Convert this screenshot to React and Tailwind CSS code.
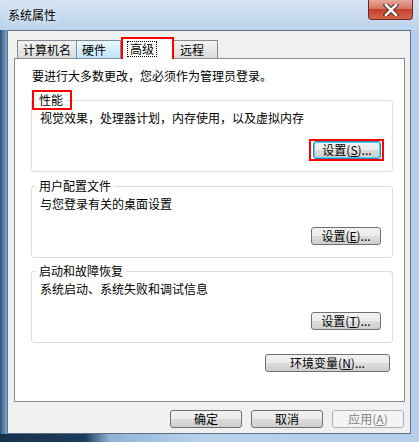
import React from 'react';

const font = { fontFamily: '"Noto Sans CJK SC", "Noto Sans", sans-serif' };

const Btn = ({ children, className = '', focused = false, disabled = false }) => (
    <div
        className={
            'h-[18px] rounded-[3px] border flex items-center justify-center text-[12px] leading-[14px] ' +
            (disabled
                ? 'border-[#adb2b5] bg-[#f4f4f4] text-[#838383] '
                : focused
                    ? 'border-[#3c7fb1] bg-[linear-gradient(#f2f2f2_0%,#ebebeb_50%,#dddddd_50%,#cfcfcf_100%)] shadow-[inset_1px_1px_0_#48d8fb,inset_-1px_-1px_0_#48d8fb] text-black '
                    : 'border-[#707070] bg-[linear-gradient(#f2f2f2_0%,#ebebeb_50%,#dddddd_50%,#cfcfcf_100%)] text-black ') +
            className
        }
    >
        {children}
    </div>
);

const Group = ({ title, desc, button, focused, boxed, className = '' }) => (
    <div className={'ml-[16px] w-[362px] h-[72px] border border-[#d5dfe5] rounded-[3px] flex flex-col ' + className}>
        <div className="-mt-[8px] ml-[4px] self-start bg-white px-[3px] h-[14px] leading-[14px] text-[12px] relative">
            {title}
            {boxed && (
                <div className="absolute left-[-4px] right-[-6px] top-[-3px] bottom-[-3px] border-2 border-[#ff0000]" />
            )}
        </div>
        <div className="ml-[8px] mt-[4px] h-[14px] leading-[14px] text-[12px]">{desc}</div>
        <div className="mt-auto mb-[12px] self-end mr-[11px] relative">
            {button}
            {focused && (
                <div className="absolute left-[-4px] right-[-3px] top-[-2px] bottom-[-2px] border-2 border-[#ff0000]" />
            )}
        </div>
    </div>
);

const CloseX = () => (
    <svg width="16" height="12" viewBox="0 0 16 12">
        <path d="M3 1 L13 11 M13 1 L3 11" stroke="#4a2018" strokeWidth="4.5" strokeLinecap="square" />
        <path d="M3 1 L13 11 M13 1 L3 11" stroke="#ffffff" strokeWidth="2.6" strokeLinecap="square" />
    </svg>
);

export default function App() {
    return (
        <div
            style={font}
            className="w-[419px] h-[442px] flex flex-col bg-[linear-gradient(90deg,#2f5678_0px,#7fa8cc_7px,#b9d3ec_30px,#c9dcf0_50%,#b5cfea_100%)] text-black overflow-hidden"
        >
            {/* title bar */}
            <div className="h-[30px] flex items-start justify-between bg-[linear-gradient(180deg,#d4e3f3,#bcd3ec)]">
                <div className="pl-[8px] pt-[7px] text-[12px] leading-[16px] text-black [text-shadow:0_0_6px_#ffffff]">
                    系统属性
                </div>
                <div className="mr-[6px] w-[45px] h-[20px] rounded-b-[4px] border border-t-0 border-[#6e2a20] bg-[linear-gradient(180deg,#e9a99c_0%,#d47563_45%,#c4412a_50%,#d5664b_100%)] flex items-center justify-center">
                    <CloseX />
                </div>
            </div>

            {/* client area */}
            <div className="ml-[7px] w-[404px] h-[404px] bg-[#f0f0f0] border border-[#5d7085] flex flex-col">
                {/* tabs */}
                <div className="flex items-end ml-[9px] mt-[5px] h-[22px] text-[12px]">
                    <div className="w-[60px] h-[18px] border border-b-0 border-[#898c95] bg-[linear-gradient(#f2f2f2,#dcdcdc)] pl-[5px] leading-[17px]">
                        计算机名
                    </div>
                    <div className="w-[44px] h-[18px] border border-l-0 border-b-0 border-[#898c95] bg-[linear-gradient(#eaf6fd,#bee6fd)] pl-[5px] leading-[17px]">
                        硬件
                    </div>
                    <div className="w-[53px] h-[22px] bg-white border-2 border-b-0 border-[#ff0000] flex items-start pt-[2px] pl-[4px] relative z-10 -mb-[1px]">
                        <span className="border border-dotted border-black px-[2px] leading-[14px]">高级</span>
                    </div>
                    <div className="w-[44px] h-[18px] border border-l-0 border-b-0 border-[#898c95] bg-[linear-gradient(#f2f2f2,#dcdcdc)] pl-[6px] leading-[17px]">
                        远程
                    </div>
                </div>

                {/* tab panel */}
                <div className="ml-[6px] w-[391px] h-[344px] bg-white border border-[#898c95] flex flex-col">
                    <div className="ml-[17px] mt-[10px] h-[14px] leading-[14px] text-[12px]">
                        要进行大多数更改，您必须作为管理员登录。
                    </div>
                    <Group
                        className="mt-[17px]"
                        title="性能"
                        boxed
                        desc="视觉效果，处理器计划，内存使用，以及虚拟内存"
                        focused
                        button={<Btn focused className="w-[68px]">设置(<u>S</u>)...</Btn>}
                    />
                    <Group
                        className="mt-[14px]"
                        title="用户配置文件"
                        desc="与您登录有关的桌面设置"
                        button={<Btn className="w-[70px]">设置(<u>E</u>)...</Btn>}
                    />
                    <Group
                        className="mt-[13px]"
                        title="启动和故障恢复"
                        desc="系统启动、系统失败和调试信息"
                        button={<Btn className="w-[70px]">设置(<u>T</u>)...</Btn>}
                    />
                    <div className="flex justify-end mr-[14px] mt-[11px]">
                        <Btn className="w-[125px]">环境变量(<u>N</u>)...</Btn>
                    </div>
                </div>

                {/* dialog buttons */}
                <div className="flex justify-end gap-[9px] mr-[6px] mt-[8px]">
                    <Btn className="w-[72px]">确定</Btn>
                    <Btn className="w-[72px]">取消</Btn>
                    <Btn disabled className="w-[72px]">应用(<u>A</u>)</Btn>
                </div>
            </div>

            {/* bottom frame */}
            <div className="flex-1 bg-[linear-gradient(90deg,#17324d_0px,#1d3d5c_85px,#8fb3d6_110px,#b8d2ec_200px,#b5cfea_100%)]" />
        </div>
    );
}
